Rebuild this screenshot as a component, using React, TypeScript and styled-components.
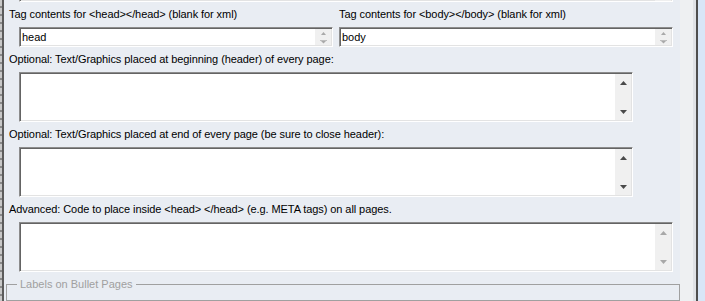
import styled, { createGlobalStyle } from 'styled-components';

const GlobalStyle = createGlobalStyle`
  html, body {
    margin: 0;
    padding: 0;
    overflow: hidden;
  }
  body {
    font-family: "Liberation Sans", Arial, sans-serif;
    font-size: 11px;
    color: #000;
    background: #e9edf3;
  }
`;

interface BoxProps {
  width: number;
  height: number;
  indent?: number;
  value?: string;
  muted?: boolean;
}

function ArrowUp({ color }: { color: string }) {
  return (
    <svg width="7" height="4" viewBox="0 0 7 4">
      <polygon points="0,4 3.5,0 7,4" fill={color} />
    </svg>
  );
}

function ArrowDown({ color }: { color: string }) {
  return (
    <svg width="7" height="4" viewBox="0 0 7 4">
      <polygon points="0,0 7,0 3.5,4" fill={color} />
    </svg>
  );
}

function SpinGlyph() {
  return (
    <svg width="7" height="13" viewBox="0 0 7 13">
      <polygon points="1,4 3.5,1 6,4" fill="#a9a9a9" />
      <rect x="0" y="9" width="7" height="1" fill="#bdbdbd" />
      <polygon points="1,10 6,10 3.5,12.5" fill="#a9a9a9" />
    </svg>
  );
}

function ScrollTextBox({ width, height, indent = 15, value = '', muted }: BoxProps) {
  const arrow = muted ? '#a8a8a8' : '#4a4a4a';
  return (
    <Sunken $width={width} $height={height} $indent={indent}>
      <Editable defaultValue={value} spellCheck={false} />
      <ScrollColumn>
        <ScrollButton>
          <ArrowUp color={arrow} />
        </ScrollButton>
        <ScrollButton>
          <ArrowDown color={arrow} />
        </ScrollButton>
      </ScrollColumn>
    </Sunken>
  );
}

function SpinTextBox({ width, height, indent = 15, value = '' }: BoxProps) {
  return (
    <Sunken $width={width} $height={height} $indent={indent}>
      <LineInput defaultValue={value} spellCheck={false} />
      <SpinColumn>
        <SpinGlyph />
      </SpinColumn>
    </Sunken>
  );
}

export default function App() {
  return (
    <>
      <GlobalStyle />
      <Window>
        <LeftEdge />
        <Panel>
          <Stub>
            <StubScroll />
          </Stub>
          <TagRow>
            <Column>
              <Caption $indent={5}>Tag contents for &lt;head&gt;&lt;/head&gt; (blank for xml)</Caption>
              <SpinTextBox width={314} height={20} value="head" />
            </Column>
            <Column>
              <Caption $indent={0}>Tag contents for &lt;body&gt;&lt;/body&gt; (blank for xml)</Caption>
              <SpinTextBox width={334} height={20} indent={0} value="body" />
            </Column>
          </TagRow>
          <Caption $indent={5}>
            Optional: Text/Graphics placed at beginning (header) of every page:
          </Caption>
          <ScrollTextBox width={614} height={50} />
          <Caption $indent={5}>
            Optional: Text/Graphics placed at end of every page (be sure to close header):
          </Caption>
          <ScrollTextBox width={614} height={50} />
          <Caption $indent={5}>
            Advanced: Code to place inside &lt;head&gt; &lt;/head&gt; (e.g. META tags) on all pages.
          </Caption>
          <ScrollTextBox width={654} height={50} muted />
          <Group>
            <GroupTitle>Labels on Bullet Pages</GroupTitle>
          </Group>
        </Panel>
        <Gutter />
        <FrameEdge />
      </Window>
    </>
  );
}

/* STYLES **********************************************************/

const Window = styled.div`
  display: flex;
  width: 705px;
  height: 301px;
  overflow: hidden;
`;

const LeftEdge = styled.div`
  width: 2px;
  flex: 0 0 auto;
  background: repeating-linear-gradient(
    to bottom,
    #c8c8c8 0 6px,
    #8a8a8a 6px 8px
  );
  border-right: 2px solid #5b5b5b;
`;

const Panel = styled.div`
  flex: 0 0 676px;
  display: flex;
  flex-direction: column;
  gap: 6px;
  background: #e9edf3;
`;

const Stub = styled.div`
  display: flex;
  justify-content: flex-end;
  width: 654px;
  height: 3px;
  margin-left: 15px;
  box-sizing: border-box;
  background: #fff;
  border-left: 1px solid #a0a0a0;
  border-right: 1px solid #fff;
  border-bottom: 1px solid #fff;
  box-shadow: inset 1px 0 0 #696969, inset 0 -1px 0 #e3e3e3;
`;

const StubScroll = styled.div`
  width: 16px;
  height: 1px;
  background: #efefef;
  border-right: 1px solid #e3e3e3;
`;

const TagRow = styled.div`
  display: grid;
  grid-template-columns: 335px 334px;
`;

const Column = styled.div`
  display: flex;
  flex-direction: column;
  gap: 6px;
`;

const Caption = styled.div<{ $indent: number }>`
  height: 13px;
  line-height: 13px;
  margin-left: ${(p) => p.$indent}px;
  letter-spacing: -0.08px;
  white-space: nowrap;
`;

const Sunken = styled.div<{ $width: number; $height: number; $indent: number }>`
  display: flex;
  flex: 0 0 auto;
  width: ${(p) => p.$width}px;
  height: ${(p) => p.$height}px;
  margin-left: ${(p) => p.$indent}px;
  box-sizing: border-box;
  padding: 1px;
  background: #fff;
  border: 1px solid;
  border-color: #8c8c8c #fff #fff #8c8c8c;
  box-shadow: inset 1px 1px 0 #646464, inset -1px -1px 0 #e3e3e3;
`;

const Editable = styled.textarea`
  flex: 1;
  min-width: 0;
  margin: 0;
  padding: 1px 2px;
  border: none;
  outline: none;
  resize: none;
  overflow: hidden;
  background: #fff;
  font: 11px "Liberation Sans", Arial, sans-serif;
`;

const LineInput = styled.input`
  flex: 1;
  min-width: 0;
  margin: 0;
  padding: 0 1px;
  border: none;
  outline: none;
  background: #fff;
  font: 11px "Liberation Sans", Arial, sans-serif;
  color: #000;
`;

const ScrollColumn = styled.div`
  display: flex;
  flex-direction: column;
  justify-content: space-between;
  width: 16px;
  background: #f0f0f0;
`;

const ScrollButton = styled.div`
  display: flex;
  align-items: center;
  justify-content: center;
  height: 17px;
`;

const SpinColumn = styled.div`
  display: flex;
  align-items: center;
  justify-content: center;
  width: 16px;
  background: #f0f0f0;
`;

const Group = styled.fieldset`
  margin: 0 0 0 2px;
  padding: 0 10px;
  height: 40px;
  border: 1px solid #a0a0a0;
`;

const GroupTitle = styled.legend`
  padding: 0 3px;
  line-height: 13px;
  color: #a0a0a0;
`;

const Gutter = styled.div`
  flex: 0 0 13px;
  background: #eef0f2;
  border-right: 3px solid #dfe2e6;
`;

const FrameEdge = styled.div`
  flex: 1;
  background: #d8e6f7;
  border-left: 2px solid #4e4e4e;
`;
